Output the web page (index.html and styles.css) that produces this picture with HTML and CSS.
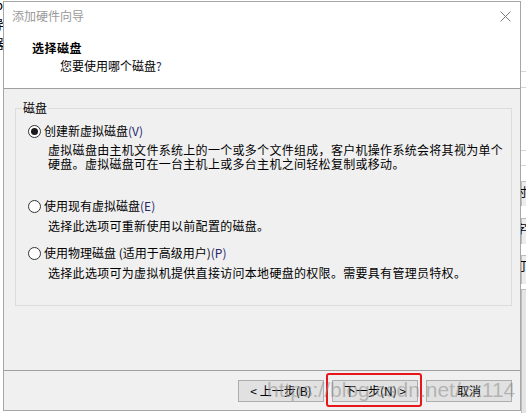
FILE: index.html
```html
<!DOCTYPE html>
<html lang="zh-CN">
<head>
<meta charset="utf-8">
<title>添加硬件向导</title>
<link rel="stylesheet" href="styles.css">
</head>
<body>
  <div class="behind-left">
    <div class="bl-text">p<br>导<br>器</div>
  </div>
  <div class="behind-right">
    <div class="br-line br-l1"></div>
    <div class="br-line br-l2"></div>
    <div class="br-line br-l3"></div>
    <div class="br-line br-l4"></div>
    <div class="br-btn br-b1"><span>时</span></div>
    <div class="br-btn br-b2"><span>字</span></div>
    <div class="br-btn br-b3"><span>打</span></div>
    <div class="br-btn br-b4"></div>
  </div>

  <div class="window">
    <div class="titlebar">
      <span class="title">添加硬件向导</span>
      <svg class="close" width="11" height="11" viewBox="0 0 11 11">
        <path d="M0.5 0.5 L10.5 10.5 M10.5 0.5 L0.5 10.5" stroke="#7a7a7a" stroke-width="1" fill="none"/>
      </svg>
    </div>
    <div class="header">
      <div class="header-title">选择磁盘</div>
      <div class="header-sub">您要使用哪个磁盘<span class="mn">?</span></div>
    </div>
    <div class="content">
      <fieldset class="group">
        <legend class="legend">磁盘</legend>
        <div class="option opt1">
          <div class="radio-row"><span class="radio checked"></span><span>创建新虚拟磁盘<span class="mn">(V)</span></span></div>
          <div class="desc d1">
            <div>虚拟磁盘由主机文件系统上的一个或多个文件组成，客户机操作系统会将其视为单个</div>
            <div>硬盘。虚拟磁盘可在一台主机上或多台主机之间轻松复制或移动。</div>
          </div>
        </div>
        <div class="option opt2">
          <div class="radio-row"><span class="radio"></span><span>使用现有虚拟磁盘<span class="mn">(E)</span></span></div>
          <div class="desc">
            <div>选择此选项可重新使用以前配置的磁盘。</div>
          </div>
        </div>
        <div class="option opt3">
          <div class="radio-row"><span class="radio"></span><span>使用物理磁盘 (适用于高级用户)<span class="mn">(P)</span></span></div>
          <div class="desc">
            <div>选择此选项可为虚拟机提供直接访问本地硬盘的权限。需要具有管理员特权。</div>
          </div>
        </div>
      </fieldset>
    </div>
    <div class="footer">
      <button class="btn">&lt; 上一步(B)</button>
      <button class="btn">下一步(N) &gt;</button>
      <button class="btn">取消</button>
    </div>
  </div>

  <div class="highlight"></div>
  <div class="watermark">https://blog.csdn.net/zx114</div>
</body>
</html>
```

FILE: styles.css
```css
html, body {
  margin: 0;
  padding: 0;
}

body {
  width: 526px;
  height: 413px;
  overflow: hidden;
  position: relative;
  background: #ffffff;
  font-family: "Noto Sans CJK SC", "Microsoft YaHei", sans-serif;
  font-size: 12px;
  color: #000;
}

/* fragments of the window behind */
.behind-left {
  position: absolute;
  left: 0;
  top: 0;
  width: 3px;
  height: 60px;
  overflow: hidden;
}

.bl-text {
  width: 12px;
  margin-left: -9px;
  margin-top: -5px;
  line-height: 19px;
  font-size: 13px;
  text-align: right;
}

.behind-right {
  position: absolute;
  left: 521px;
  top: 0;
  width: 5px;
  height: 413px;
  overflow: hidden;
}

.br-line {
  position: absolute;
  left: 0;
  width: 10px;
  height: 1px;
  background: #d4d4d4;
}

.br-l1 { top: 71px; }
.br-l2 { top: 87px; }
.br-l3 { top: 150px; }
.br-l4 { top: 165px; }

.br-btn {
  position: absolute;
  left: 0;
  width: 20px;
  background: #ececec;
  border-top: 1px solid #bdbdbd;
  border-left: 1px solid #bdbdbd;
  font-size: 12px;
  line-height: 20px;
}

.br-btn span {
  display: block;
  margin-left: -7px;
}

.br-b1 { top: 181px; height: 24px; }
.br-b2 { top: 218px; height: 25px; }
.br-b3 { top: 255px; height: 28px; }
.br-b4 { top: 289px; height: 130px; background: #e4e4e4; }

/* dialog */
.window {
  position: absolute;
  left: 3px;
  top: 1px;
  width: 516px;
  border: 1px solid #a6a6a6;
  background: #f0f0f0;
}

.titlebar {
  height: 27px;
  background: #ffffff;
  display: flex;
  align-items: center;
  justify-content: space-between;
  padding: 0 9px 0 8px;
}

.title {
  color: #9a9a9a;
  line-height: 16px;
}

.close {
  display: block;
  margin-top: 1px;
}

.header {
  height: 59px;
  background: #ffffff;
  border-bottom: 1px solid #a0a0a0;
  padding-left: 28px;
}

.header-title {
  font-weight: bold;
  line-height: 16px;
  padding-top: 11px;
  letter-spacing: 0.5px;
}

.header-sub {
  line-height: 16px;
  margin-top: 2px;
  padding-left: 28px;
}

.mn {
  color: #26266a;
}

.content {
  height: 281px;
  box-sizing: border-box;
  padding: 11px 8px 0 11px;
}

.group {
  margin: 0;
  padding: 0 10px 25px 12px;
  border: 1px solid #dcdcdc;
  min-width: 0;
}

.legend {
  padding: 0 1px;
  margin-left: -6px;
  line-height: 16px;
}

.radio-row {
  display: flex;
  align-items: center;
  gap: 3px;
  line-height: 16px;
  white-space: nowrap;
}

.radio {
  width: 13px;
  height: 13px;
  box-sizing: border-box;
  border: 1px solid #333333;
  border-radius: 50%;
  background: #ffffff;
  display: flex;
  align-items: center;
  justify-content: center;
  flex: none;
}

.radio.checked::after {
  content: "";
  width: 7px;
  height: 7px;
  border-radius: 50%;
  background: #1a1a1a;
}

.opt1 { margin-top: 7px; }
.opt2 { margin-top: 27px; }
.opt3 { margin-top: 12px; }

.desc {
  padding-left: 20px;
  margin-top: 5px;
  line-height: 14px;
  letter-spacing: 0.3px;
  white-space: nowrap;
}

.desc.d1 {
  margin-top: 4px;
}

.footer {
  height: 30px;
  padding: 9px 8px 0 0;
  border-top: 1px solid #a0a0a0;
  display: flex;
  justify-content: flex-end;
  align-items: flex-start;
  gap: 8px;
}

.btn {
  width: 86px;
  height: 22px;
  margin: 0;
  padding: 0;
  border: 1px solid #adadad;
  background: #e1e1e1;
  font-family: "Noto Sans CJK SC", "Microsoft YaHei", sans-serif;
  font-size: 12px;
  line-height: 20px;
  color: #000;
}

/* annotation overlays */
.highlight {
  position: absolute;
  left: 326px;
  top: 373px;
  width: 96px;
  height: 34px;
  box-sizing: border-box;
  border: 2.5px solid #e8151b;
  border-radius: 3px;
}

.watermark {
  position: absolute;
  left: 267px;
  top: 378px;
  font-family: "Liberation Sans", Arial, sans-serif;
  font-size: 21px;
  line-height: 24px;
  color: rgba(140, 140, 140, 0.55);
  white-space: nowrap;
  pointer-events: none;
}
```
